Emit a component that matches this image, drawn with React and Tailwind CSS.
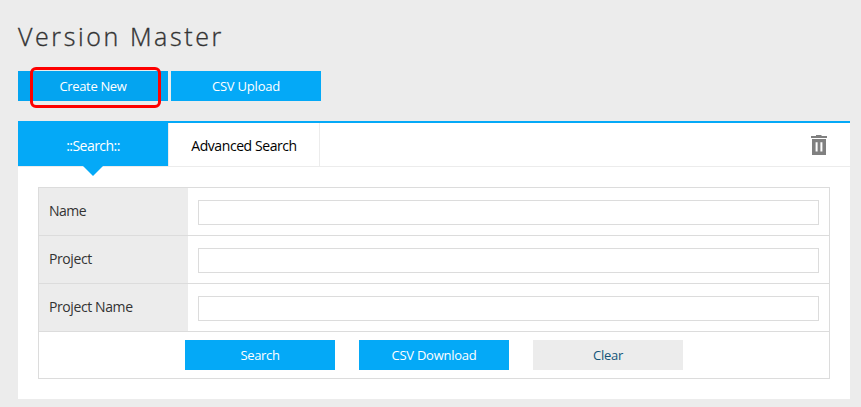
const FONT = "font-['Open_Sans','Noto_Sans',sans-serif]";

function Button({ className, children }) {
  return (
    <button type="button" className={`flex h-[30px] w-[150px] items-center justify-center whitespace-nowrap text-[13px] leading-none ${className}`}>
      {children}
    </button>
  );
}

function TrashIcon() {
  return (
    <svg width="18" height="21" viewBox="0 0 18 21" fill="#808080" aria-label="Delete">
      <path d="M6 0h5.500v1h5.500v2H1V1h5z" />
      <path fillRule="evenodd" d="M2 4h14v16H2zM5.600 7.200v9.300h2V7.200zM10.400 7.200v9.300h2V7.200z" />
    </svg>
  );
}

const fields = [
  { label: "Name", style: "tracking-[-0.5px]" },
  { label: "Project", style: "tracking-[-0.4px]" },
  { label: "Project Name", style: "tracking-[-0.4px]" },
];

export default function App() {
  return (
    <div className={`h-[407px] w-[861px] overflow-hidden bg-[#ececec] pl-[18px] pr-[11px] pt-[17px] ${FONT}`}>
      <h1 className="h-[54px] whitespace-nowrap text-[25px] font-light leading-[38px] tracking-[2.6px] text-[#333] [-webkit-text-stroke:0.35px_#333]">Version Master</h1>

      <div className="flex h-[50px] gap-[3px]">
        <div className="relative">
          <Button className="bg-[#04a4f0] tracking-[-0.35px] text-white">Create New</Button>
          <div className="pointer-events-none absolute left-3 -top-1 h-[41px] w-[131px] rounded-[6px] border-[3px] border-[#fe0000]" />
        </div>
        <Button className="bg-[#04a9f7] tracking-[-0.2px] text-white">CSV Upload</Button>
      </div>

      <section className="h-[278px] border-t-2 border-[#04a9f7] bg-white">
        <div className="flex h-11 border-b border-[#ececec] text-[14px] leading-none">
          <div className="relative flex w-[150px] items-center justify-center bg-[#04a9f7] pt-0.5 tracking-[-0.55px] text-white">
            ::Search::
            <span className="absolute left-[65px] top-full border-x-10 border-t-10 border-x-transparent border-t-[#04a9f7]" />
          </div>
          <div className="flex w-[152px] items-center justify-center whitespace-nowrap border-x border-[#ececec] pt-0.5 tracking-[-0.42px] text-black">Advanced Search</div>
          <div className="ml-auto mr-[22px] mt-3">
            <TrashIcon />
          </div>
        </div>

        <div className="mx-5 mt-5 h-48 border border-[#dcdcdc]">
          {fields.map((f) => (
            <label key={f.label} className="flex h-12 border-b border-[#dcdcdc]">
              <span className={`flex w-[149px] items-center whitespace-nowrap bg-[#ececec] pb-0.5 pl-2.5 text-[14px] leading-none text-[#333] ${f.style}`}>{f.label}</span>
              <span className="flex-1 px-2.5 pt-3">
                <input type="text" className="block h-[25px] w-full border border-[#dcdcdc] bg-white px-2 text-[13px] outline-none" />
              </span>
            </label>
          ))}
          <div className="flex gap-6 pl-[146px] pt-2">
            <Button className="bg-[#04a9f7] tracking-[-0.35px] text-white">Search</Button>
            <Button className="bg-[#04a9f7] tracking-[-0.25px] text-white">CSV Download</Button>
            <Button className="bg-[#ececec] tracking-[-0.25px] text-[#135479]">Clear</Button>
          </div>
        </div>
      </section>
    </div>
  );
}
